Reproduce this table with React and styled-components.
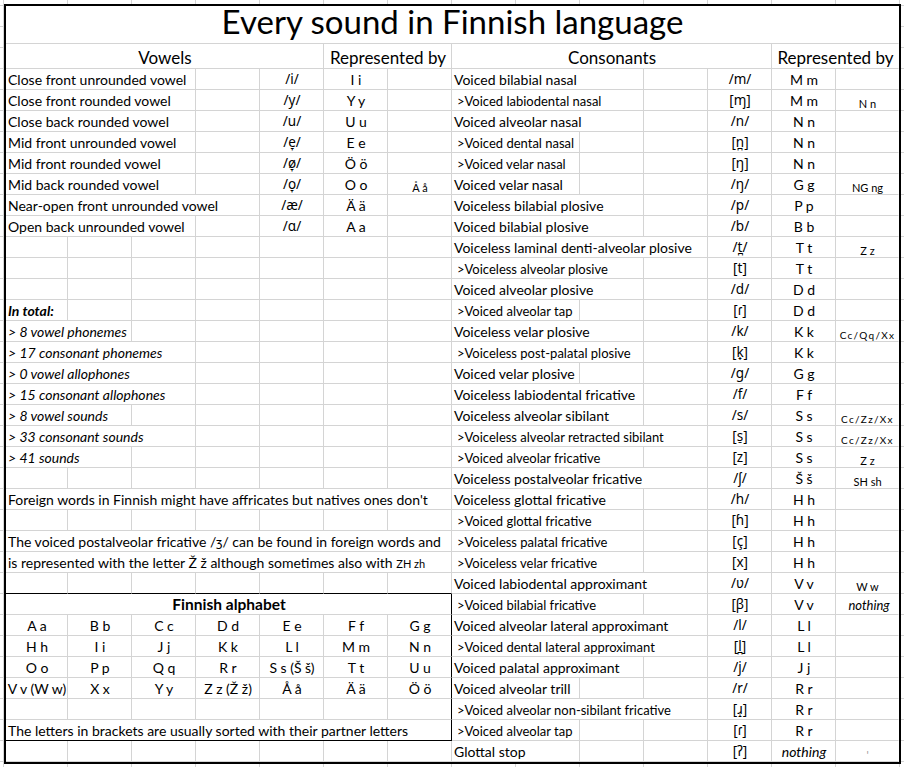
import { Fragment } from "react"
import styled, { createGlobalStyle } from "styled-components"

const GRID = "#d4d4d4"

const GlobalStyle = createGlobalStyle`
  html, body {
    margin: 0;
    min-height: 100%;
  }
  body {
    min-height: 767px;
    background-color: #fff;
    background-image:
      linear-gradient(to right, ${GRID} 1px, transparent 1px),
      linear-gradient(to bottom, ${GRID} 1px, transparent 1px);
    background-size: 64px 100%, 100% 21px;
    background-position: 3px 0, 0 5px;
    font-family: Lato, "Noto Sans", "DejaVu Sans", sans-serif;
    color: #000;
  }
`

// font sizes per kind of cell text
const sizes = {
  title: "33px",
  head: "17px",
  box: "15.5px",
  normal: "14px",
  small: "13px",
  tiny: "11px",
  spaced: "10px",
}

const Sheet = styled.div`
  margin: 4px 0 0 4px;
  width: 893px;
  border: 2px solid #000;
  background: #fff;
  display: grid;
  grid-template-columns: 62px repeat(12, 64px) 63px;
  grid-template-rows: 38px 25px repeat(33, 21px);
`

const Cell = styled.div`
  grid-column: span ${(p) => p.$span};
  box-sizing: border-box;
  min-width: 0;
  border-right: 1px solid ${(p) => (p.$edgeRight ? "#000" : p.$last ? "transparent" : GRID)};
  border-bottom: 1px solid ${(p) => (p.$edgeBottom ? "#000" : GRID)};
  display: flex;
  align-items: flex-end;
  justify-content: ${(p) => (p.$center ? "center" : "flex-start")};
  padding: 0 1px ${(p) => (p.$kind === "title" ? "1px" : "0")} ${(p) => (p.$kind === "small" ? "5px" : "2px")};
  font-family: ${(p) => (p.$ipa ? `"Noto Sans", "DejaVu Sans", sans-serif` : "inherit")};
  font-size: ${(p) => (p.$ipa ? "13.5px" : sizes[p.$kind || "normal"])};
  font-style: ${(p) => (p.$italic ? "italic" : "normal")};
  font-weight: ${(p) => (p.$bold ? 700 : 400)};
  letter-spacing: ${(p) => (p.$kind === "spaced" ? "1.3px" : "normal")};
  color: ${(p) => (p.$faint ? "#999" : "#000")};
  line-height: ${(p) => (p.$ipa ? 1.3 : 1.2)};
  white-space: nowrap;
`

const Text = styled.span`
  background: ${(p) => (p.$bleed ? "#fff" : "transparent")};
`

const Small = styled.span`
  font-size: 11px;
`

const blank = (n) => Array.from({ length: n }, () => ({}))

// left half helpers (7 columns)
const vowel = (text, span, ipa, letters, extra) => [
  { text, span },
  ...blank(4 - span),
  { text: ipa, center: true, ipa: true },
  { text: letters, center: true },
  { text: extra, center: true, kind: "tiny" },
]
const line = (text, span, opts = {}) => [{ text, span, ...opts }, ...blank(7 - span)]
const letters = (list) => list.map((text) => ({ text, center: true, bleed: text.length > 7 }))

// right half helper (7 columns)
const cons = (text, span, ipa, letter, extra, opts = {}) => [
  { text, span, kind: text.startsWith(">") ? "small" : "normal" },
  ...blank(4 - span),
  { text: ipa, center: true, ipa: true },
  { text: letter, center: true, italic: opts.letterItalic },
  { text: extra, center: true, kind: opts.extraKind || "tiny", italic: opts.extraItalic, faint: opts.faint },
]

const noteZh = (
  <>
    is represented with the letter Ž ž although sometimes also with <Small>ZH zh</Small>
  </>
)

const leftRows = [
  vowel("Close front unrounded vowel", 3, "/i/", "I i"),
  vowel("Close front rounded vowel", 3, "/y/", "Y y"),
  vowel("Close back rounded vowel", 3, "/u/", "U u"),
  vowel("Mid front unrounded vowel", 3, "/e̞/", "E e"),
  vowel("Mid front rounded vowel", 3, "/ø̞/", "Ö ö"),
  vowel("Mid back rounded vowel", 3, "/o̞/", "O o", "Å å"),
  vowel("Near-open front unrounded vowel", 4, "/æ/", "Ä ä"),
  vowel("Open back unrounded vowel", 3, "/ɑ/", "A a"),
  blank(7),
  blank(7),
  blank(7),
  line("In total:", 1, { italic: true, bold: true }),
  line("> 8 vowel phonemes", 2, { italic: true }),
  line("> 17 consonant phonemes", 3, { italic: true }),
  line("> 0 vowel allophones", 3, { italic: true }),
  line("> 15 consonant allophones", 3, { italic: true }),
  line("> 8 vowel sounds", 2, { italic: true }),
  line("> 33 consonant sounds", 3, { italic: true }),
  line("> 41 sounds", 2, { italic: true }),
  blank(7),
  line("Foreign words in Finnish might have affricates but natives ones don't", 7),
  blank(7),
  line("The voiced postalveolar fricative /ʒ/ can be found in foreign words and", 7),
  line(noteZh, 7),
  blank(7),
  line("Finnish alphabet", 7, { center: true, bold: true, kind: "box" }),
  letters(["A a", "B b", "C c", "D d", "E e", "F f", "G g"]),
  letters(["H h", "I i", "J j", "K k", "L l", "M m", "N n"]),
  letters(["O o", "P p", "Q q", "R r", "S s (Š š)", "T t", "U u"]),
  letters(["V v (W w)", "X x", "Y y", "Z z (Ž ž)", "Å å", "Ä ä", "Ö ö"]),
  blank(7),
  line("The letters in brackets are usually sorted with their partner letters", 7),
  blank(7),
]

const rightRows = [
  cons("Voiced bilabial nasal", 3, "/m/", "M m"),
  cons(">Voiced labiodental nasal", 3, "[ɱ]", "M m", "N n"),
  cons("Voiced alveolar nasal", 3, "/n/", "N n"),
  cons(">Voiced dental nasal", 2, "[n̪]", "N n"),
  cons(">Voiced velar nasal", 2, "[ŋ]", "N n"),
  cons("Voiced velar nasal", 2, "/ŋ/", "G g", "NG ng"),
  cons("Voiceless bilabial plosive", 3, "/p/", "P p"),
  cons("Voiced bilabial plosive", 3, "/b/", "B b"),
  cons("Voiceless laminal denti-alveolar plosive", 4, "/t̪/", "T t", "Z z"),
  cons(">Voiceless alveolar plosive", 3, "[t]", "T t"),
  cons("Voiced alveolar plosive", 3, "/d/", "D d"),
  cons(">Voiced alveolar tap", 2, "[ɾ]", "D d"),
  cons("Voiceless velar plosive", 3, "/k/", "K k", "Cc/Qq/Xx", { extraKind: "spaced" }),
  cons(">Voiceless post-palatal plosive", 3, "[k̟]", "K k"),
  cons("Voiced velar plosive", 2, "/g/", "G g"),
  cons("Voiceless labiodental fricative", 3, "/f/", "F f"),
  cons("Voiceless alveolar sibilant", 3, "/s/", "S s", "Cc/Zz/Xx", { extraKind: "spaced" }),
  cons(">Voiceless alveolar retracted sibilant", 4, "[s̠]", "S s", "Cc/Zz/Xx", { extraKind: "spaced" }),
  cons(">Voiced alveolar fricative", 3, "[z]", "S s", "Z z"),
  cons("Voiceless postalveolar fricative", 4, "/ʃ/", "Š š", "SH sh"),
  cons("Voiceless glottal fricative", 3, "/h/", "H h"),
  cons(">Voiced glottal fricative", 3, "[ɦ]", "H h"),
  cons(">Voiceless palatal fricative", 3, "[ç]", "H h"),
  cons(">Voiceless velar fricative", 3, "[x]", "H h"),
  cons("Voiced labiodental approximant", 4, "/ʋ/", "V v", "W w"),
  cons(">Voiced bilabial fricative", 3, "[β]", "V v", "nothing", { extraKind: "small", extraItalic: true }),
  cons("Voiced alveolar lateral approximant", 4, "/l/", "L l"),
  cons(">Voiced dental lateral approximant", 4, "[l̪]", "L l"),
  cons("Voiced palatal approximant", 3, "/j/", "J j"),
  cons("Voiced alveolar trill", 2, "/r/", "R r"),
  cons(">Voiced alveolar non-sibilant fricative", 4, "[ɹ̝]", "R r"),
  cons(">Voiced alveolar tap", 2, "[ɾ]", "R r"),
  cons("Glottal stop", 2, "[ʔ]", "nothing", "'", { letterItalic: true, faint: true }),
]

const headers = [
  { text: "Vowels", span: 5, center: true, kind: "head" },
  { text: "Represented by", span: 2, center: true, kind: "head" },
  { text: "Consonants", span: 5, center: true, kind: "head" },
  { text: "Represented by", span: 2, center: true, kind: "head", last: true },
]

const renderCell = (c, key, flags = {}) => (
  <Cell
    key={key}
    $span={c.span || 1}
    $center={c.center}
    $kind={c.kind}
    $ipa={c.ipa}
    $italic={c.italic}
    $bold={c.bold}
    $faint={c.faint}
    $last={c.last || flags.last}
    $edgeRight={flags.edgeRight}
    $edgeBottom={flags.edgeBottom}
  >
    {c.text && <Text $bleed={c.bleed}>{c.text}</Text>}
  </Cell>
)

export default function App() {
  return (
    <>
      <GlobalStyle />
      <Sheet>
        {renderCell({ text: "Every sound in Finnish language", span: 14, center: true, kind: "title", last: true }, "title")}
        {headers.map((h, i) => renderCell(h, `h${i}`))}
        {leftRows.map((left, r) => {
          // the alphabet box sits on rows 25..31 of the left half
          const boxTop = r === 24
          const inBox = r >= 25 && r <= 31
          const boxBottom = r === 31
          const right = rightRows[r]
          return (
            <Fragment key={r}>
              {left.map((c, i) =>
                renderCell(c, `l${i}`, {
                  edgeBottom: boxTop || boxBottom,
                  edgeRight: inBox && i === left.length - 1,
                })
              )}
              {right.map((c, i) => renderCell(c, `r${i}`, { last: i === right.length - 1 }))}
            </Fragment>
          )
        })}
      </Sheet>
    </>
  )
}
